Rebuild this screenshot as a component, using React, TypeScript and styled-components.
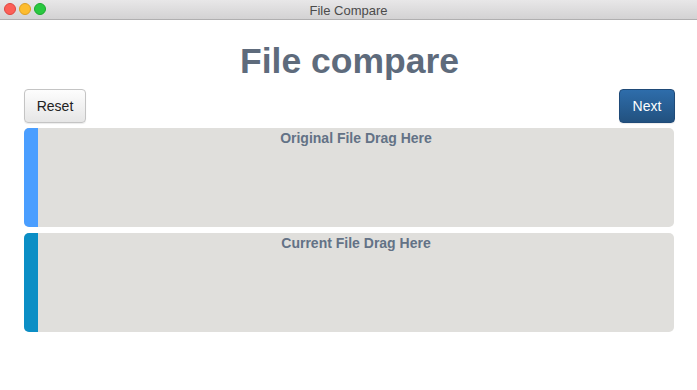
import React from "react";
import styled, { createGlobalStyle } from "styled-components";

// Types -------------------------------------------------------------------------

interface DropZoneProps {
  label: string;
  accent: string;
}

// Component ---------------------------------------------------------------------

const DropZone: React.FC<DropZoneProps> = ({ label, accent }) => (
  <Zone>
    <Accent $color={accent} />
    <ZoneLabel>{label}</ZoneLabel>
  </Zone>
);

const App: React.FC = () => {
  return (
    <>
      <GlobalStyle />
      <Window>
        <TitleBar>
          <Lights>
            <Light $fill="#fc5f57" $edge="#de4640" />
            <Light $fill="#fdbc2e" $edge="#de9f22" />
            <Light $fill="#29c840" $edge="#1ba82e" />
          </Lights>
          <WindowTitle>File Compare</WindowTitle>
        </TitleBar>
        <Content>
          <Heading>File compare</Heading>
          <Toolbar>
            <Button>Reset</Button>
            <Button $primary>Next</Button>
          </Toolbar>
          <Zones>
            <DropZone label="Original File Drag Here" accent="#4a9eff" />
            <DropZone label="Current File Drag Here" accent="#0b8ec5" />
          </Zones>
        </Content>
      </Window>
    </>
  );
};

export default App;

// Styled ------------------------------------------------------------------------

const GlobalStyle = createGlobalStyle`
  html, body {
    margin: 0;
    padding: 0;
    background: #ffffff;
    font-family: "Liberation Sans", Arial, sans-serif;
  }
`;

const Window = styled.div`
  width: 697px;
  height: 390px;
  background: #ffffff;
  display: flex;
  flex-direction: column;
`;

const TitleBar = styled.div`
  position: relative;
  height: 19px;
  flex: none;
  display: flex;
  align-items: center;
  justify-content: center;
  background: linear-gradient(#e8e7e8, #d3d2d3);
  border-bottom: 1px solid #b0afb0;
`;

const Lights = styled.div`
  position: absolute;
  left: 4px;
  top: 3px;
  display: flex;
  gap: 3px;
`;

const Light = styled.span<{ $fill: string; $edge: string }>`
  box-sizing: border-box;
  width: 12px;
  height: 12px;
  border-radius: 50%;
  background: ${({ $fill }) => $fill};
  border: 0.5px solid ${({ $edge }) => $edge};
`;

const WindowTitle = styled.div`
  font-family: "Liberation Sans", Arial, sans-serif;
  font-size: 13px;
  color: #4b4b4b;
  margin-top: 1px;
`;

const Content = styled.div`
  padding: 0 22px 0 24px;
  display: flex;
  flex-direction: column;
`;

const Heading = styled.h1`
  margin: 19px 0 0;
  height: 50px;
  text-align: center;
  font-size: 35.5px;
  font-weight: bold;
  color: #5e6b7c;
  line-height: 44px;
`;

const Toolbar = styled.div`
  display: flex;
  justify-content: space-between;
  align-items: center;
  height: 34px;
`;

const Button = styled.button<{ $primary?: boolean }>`
  height: 34px;
  padding: 0;
  border-radius: 4px;
  font-family: "Liberation Sans", Arial, sans-serif;
  font-size: 14px;
  border: 1px solid ${({ $primary }) => ($primary ? "#1f4a78" : "#c4c4c4")};
  color: ${({ $primary }) => ($primary ? "#ffffff" : "#222222")};
  background: ${({ $primary }) =>
    $primary
      ? "linear-gradient(#2e6dab, #22517f)"
      : "linear-gradient(#fdfdfd, #e6e6e6)"};
  box-shadow: 0 1px 1px rgba(0, 0, 0, 0.08);
  width: ${({ $primary }) => ($primary ? "56px" : "62px")};
`;

const Zones = styled.div`
  margin-top: 5px;
  margin-right: 1px;
  display: flex;
  flex-direction: column;
  gap: 6px;
`;

const Zone = styled.div`
  position: relative;
  height: 99px;
  background: #e0dfdc;
  border-radius: 5px;
  overflow: hidden;
  display: flex;
`;

const Accent = styled.div<{ $color: string }>`
  width: 14px;
  flex: none;
  background: ${({ $color }) => $color};
`;

const ZoneLabel = styled.div`
  flex: 1;
  text-align: center;
  padding-top: 2px;
  font-size: 14px;
  font-weight: bold;
  color: #637286;
  line-height: 17px;
`;
